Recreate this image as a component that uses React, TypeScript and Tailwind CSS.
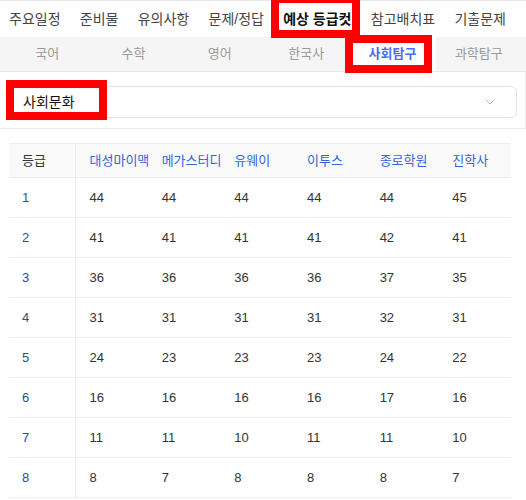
import { ChevronDown } from 'lucide-react'

const topTabs = ['주요일정', '준비물', '유의사항', '문제/정답', '예상 등급컷', '참고배치표', '기출문제']
const subTabs = ['국어', '수학', '영어', '한국사', '사회탐구', '과학탐구']
const sources = ['대성마이맥', '메가스터디', '유웨이', '이투스', '종로학원', '진학사']

const rows = [
  { grade: 1, cuts: [44, 44, 44, 44, 44, 45] },
  { grade: 2, cuts: [41, 41, 41, 41, 42, 41] },
  { grade: 3, cuts: [36, 36, 36, 36, 37, 35] },
  { grade: 4, cuts: [31, 31, 31, 31, 32, 31] },
  { grade: 5, cuts: [24, 23, 23, 23, 24, 22] },
  { grade: 6, cuts: [16, 16, 16, 16, 17, 16] },
  { grade: 7, cuts: [11, 11, 10, 11, 11, 10] },
  { grade: 8, cuts: [8, 7, 8, 8, 8, 7] },
]

const App = () => {
  return (
    <div className="relative w-[526px] h-[500px] overflow-hidden bg-white font-['Liberation_Sans','Noto_Sans_CJK_KR',sans-serif]">
      {/* main tabs */}
      <div className="h-[37px] border-t border-[#e8e8e8] flex items-center justify-between pl-[9px] pr-[20px] text-[14px] text-[#444]">
        {topTabs.map((tab) => (
          <span key={tab} className={tab === '예상 등급컷' ? 'font-bold text-[#111]' : ''}>
            {tab}
          </span>
        ))}
      </div>

      {/* subject tabs */}
      <div className="h-[35px] bg-[#f5f5f5] border-b border-[#e6e6e6] grid grid-cols-6 px-[4px] text-[13px] text-[#999]">
        {subTabs.map((tab) => (
          <div
            key={tab}
            className={
              tab === '사회탐구'
                ? 'flex items-center justify-center bg-white font-bold text-[#4a6ef0]'
                : 'flex items-center justify-center'
            }
          >
            {tab}
          </div>
        ))}
      </div>

      {/* subject select */}
      <div className="px-[8px] pt-[14px] pb-[10px] border-b border-[#ebebeb] border-r">
        <div className="h-[32px] border border-[#e3e3e3] rounded-[6px] flex items-center justify-between pl-[14px] pr-[18px]">
          <span className="text-[14px] text-[#111]">사회문화</span>
          <ChevronDown size={16} strokeWidth={1.5} className="text-[#b5b5b5]" />
        </div>
      </div>

      {/* grade cut table */}
      <div className="pt-[14px] pl-[9px] pr-[15px]">
        <table className="w-full table-fixed border-collapse text-[13px] text-[#333]">
          <colgroup>
            <col className="w-[66px]" />
            <col />
            <col />
            <col />
            <col />
            <col />
            <col />
          </colgroup>
          <thead>
            <tr className="h-[34px] bg-[#fafafa] border-t border-b border-[#eeeeee]">
              <th className="text-left font-normal pl-[13px] border-r border-[#eeeeee]">등급</th>
              {sources.map((s) => (
                <th key={s} className="text-left font-normal pl-[14px] text-[#3465d8] whitespace-nowrap">
                  {s}
                </th>
              ))}
            </tr>
          </thead>
          <tbody>
            {rows.map((row) => (
              <tr key={row.grade} className="h-[40px] border-b border-[#eeeeee]">
                <td className="pl-[13px] text-[#2d4f86] border-r border-[#eeeeee]">{row.grade}</td>
                {row.cuts.map((c, i) => (
                  <td key={i} className="pl-[14px]">
                    {c}
                  </td>
                ))}
              </tr>
            ))}
          </tbody>
        </table>
      </div>

      {/* red highlight boxes */}
      <div className="absolute left-[271px] top-[-5px] w-[89px] h-[43px] border-[8px] border-[#ff0000]" />
      <div className="absolute left-[345px] top-[35px] w-[87px] h-[38px] border-[8px] border-[#ff0000]" />
      <div className="absolute left-[6px] top-[80px] w-[101px] h-[40px] border-[8px] border-[#ff0000]" />
    </div>
  )
}

export default App
